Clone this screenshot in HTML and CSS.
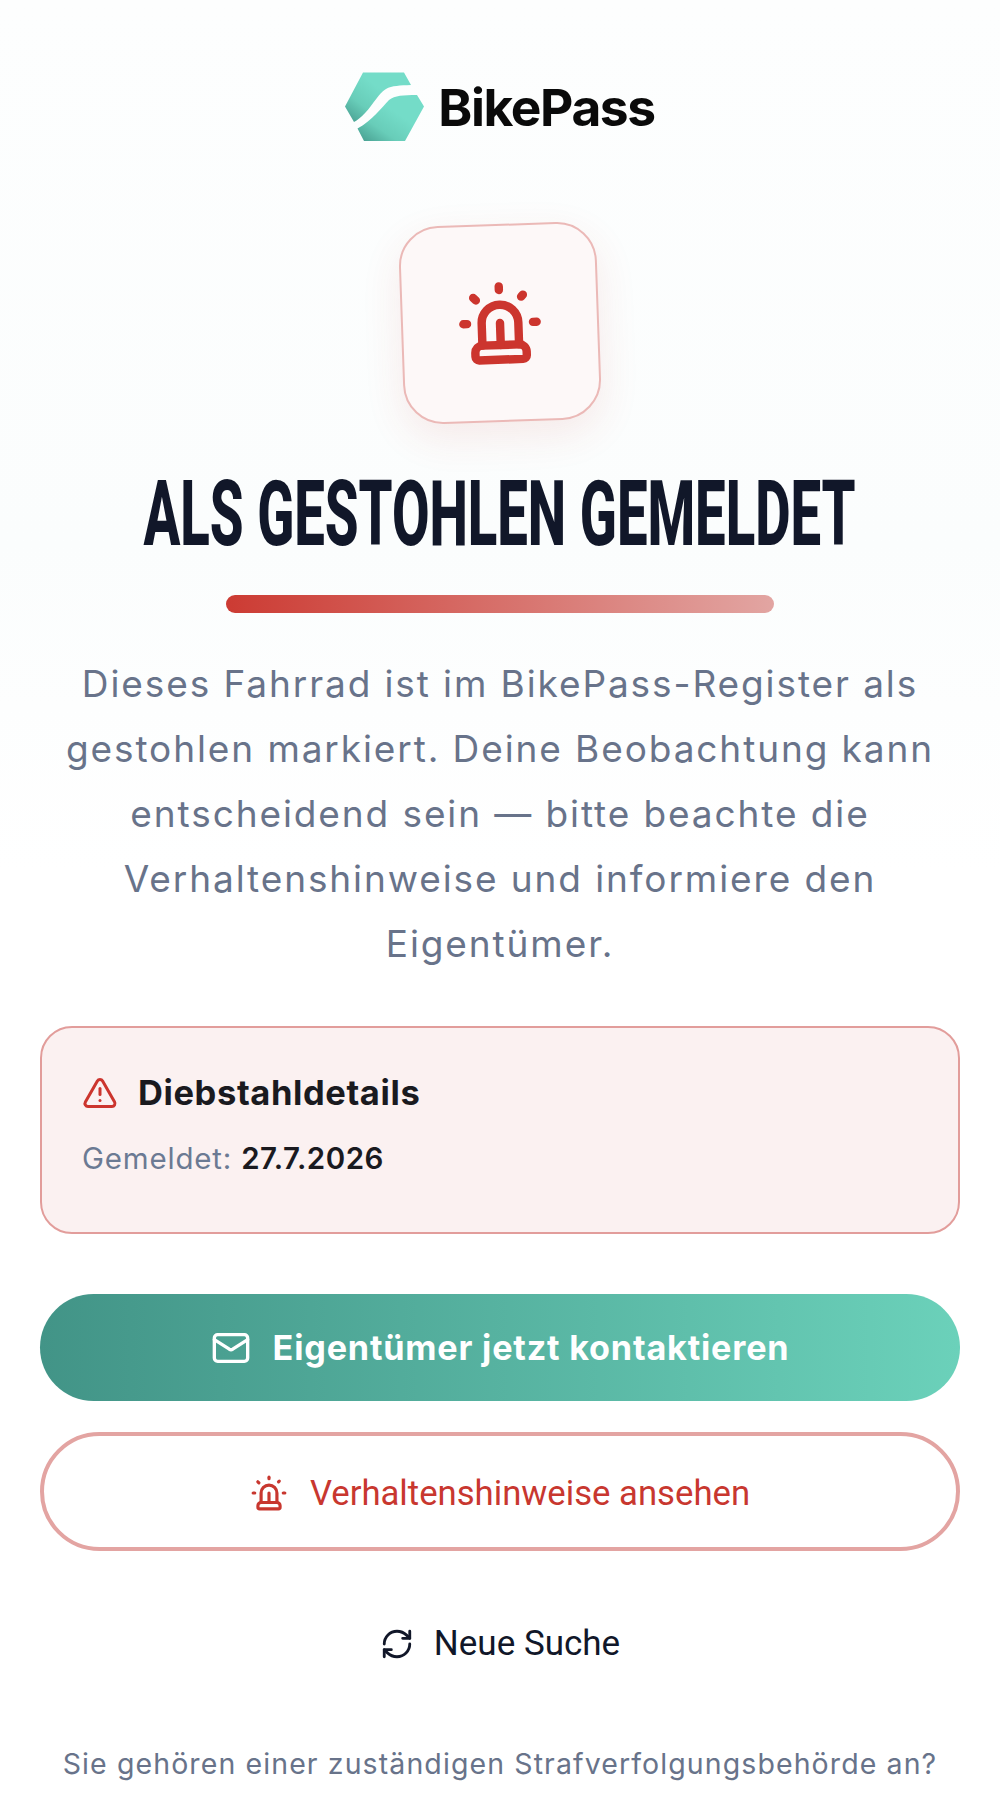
FILE: index.html
```html
<!DOCTYPE html>
<html lang="de">
<head>
<meta charset="utf-8">
<title>BikePass</title>
<link rel="stylesheet" href="styles.css">
</head>
<body>
<main class="page">
  <header class="brand">
    <svg class="brand-mark" viewBox="0 0 80 70" aria-hidden="true">
      <defs>
        <linearGradient id="hex" x1="0" y1="1" x2="0.6" y2="0.4">
          <stop offset="0" stop-color="#459b8d"/>
          <stop offset="0.5" stop-color="#68cdb9"/>
          <stop offset="1" stop-color="#74dcc8"/>
        </linearGradient>
      </defs>
      <path fill="url(#hex)" d="M18 0.5H59L66 13C55 13.500 47 13.500 41 17C31 23 24 42 9 50L0 34.500Z"/>
      <path fill="url(#hex)" d="M72 23L79 34.500L60 69H19L12.500 56.500C28 48 36 36 44 28C50 23.500 58 23 72 23Z"/>
    </svg>
    <span class="brand-name">BikePass</span>
  </header>

  <div class="tile">
    <svg class="tile-icon" viewBox="0 0 24 24" fill="none" stroke="currentColor" stroke-width="2.300" stroke-linecap="round" stroke-linejoin="round" aria-hidden="true">
      <path d="M7 18v-6a5 5 0 1 1 10 0v6"/>
      <path d="M5 21a1 1 0 0 0 1 1h12a1 1 0 0 0 1-1v-1a2 2 0 0 0-2-2H7a2 2 0 0 0-2 2z"/>
      <path d="M21 12h1"/><path d="M18.500 4.500 18 5"/><path d="M2 12h1"/><path d="M12 2v1"/><path d="m4.929 4.929.707.707"/><path d="M12 12v6"/>
    </svg>
  </div>

  <h1 class="title">ALS GESTOHLEN GEMELDET</h1>
  <div class="title-bar"></div>

  <p class="lead">Dieses Fahrrad ist im BikePass-Register als gestohlen markiert. Deine Beobachtung kann entscheidend sein — bitte beachte die Verhaltenshinweise und informiere den Eigentümer.</p>

  <section class="details">
    <div class="details-head">
      <svg class="details-icon" viewBox="0 0 24 24" fill="none" stroke="currentColor" stroke-width="2" stroke-linecap="round" stroke-linejoin="round" aria-hidden="true">
        <path d="m21.730 18-8-14a2 2 0 0 0-3.480 0l-8 14A2 2 0 0 0 4 21h16a2 2 0 0 0 1.730-3"/>
        <path d="M12 9v4"/><path d="M12 17h.01"/>
      </svg>
      <h2 class="details-title">Diebstahldetails</h2>
    </div>
    <p class="details-row"><span class="details-label">Gemeldet:</span> <strong class="details-value">27.7.2026</strong></p>
  </section>

  <a class="btn btn-primary">
    <svg class="btn-icon-mail" viewBox="0 0 24 24" fill="none" stroke="currentColor" stroke-width="2" stroke-linecap="round" stroke-linejoin="round" aria-hidden="true">
      <path d="m22 7-8.991 5.727a2 2 0 0 1-2.009 0L2 7"/>
      <rect x="2" y="4" width="20" height="16" rx="2"/>
    </svg>
    Eigentümer jetzt kontaktieren
  </a>

  <a class="btn btn-outline">
    <svg class="btn-icon-siren" viewBox="0 0 24 24" fill="none" stroke="currentColor" stroke-width="2" stroke-linecap="round" stroke-linejoin="round" aria-hidden="true">
      <path d="M7 18v-6a5 5 0 1 1 10 0v6"/>
      <path d="M5 21a1 1 0 0 0 1 1h12a1 1 0 0 0 1-1v-1a2 2 0 0 0-2-2H7a2 2 0 0 0-2 2z"/>
      <path d="M21 12h1"/><path d="M18.500 4.500 18 5"/><path d="M2 12h1"/><path d="M12 2v1"/><path d="m4.929 4.929.707.707"/><path d="M12 12v6"/>
    </svg>
    Verhaltenshinweise ansehen
  </a>

  <a class="search-again">
    <svg class="search-icon" viewBox="0 0 24 24" fill="none" stroke="currentColor" stroke-width="2" stroke-linecap="round" stroke-linejoin="round" aria-hidden="true">
      <path d="M3 12a9 9 0 0 1 9-9 9.750 9.750 0 0 1 6.740 2.740L21 8"/><path d="M21 3v5h-5"/>
      <path d="M21 12a9 9 0 0 1-9 9 9.750 9.750 0 0 1-6.740-2.740L3 16"/><path d="M8 16H3v5"/>
    </svg>
    Neue Suche
  </a>

  <p class="footnote">Sie gehören einer zuständigen Strafverfolgungsbehörde an?</p>
</main>
</body>
</html>
```

FILE: styles.css
```css
* { box-sizing: border-box; }
html, body { margin: 0; padding: 0; background: #fff; }
body { font-family: Inter, "Liberation Sans", sans-serif; overflow: hidden; }
.page {
  height: 1816px;
  overflow: hidden;
  padding: 72px 40px 0;
  display: flex;
  flex-direction: column;
  align-items: center;
  background: linear-gradient(180deg, #fdfefe 0%, #fbfdfd 30%, #ffffff 48%, #ffffff 100%);
}
.brand { display: flex; align-items: center; gap: 13px; height: 70px; }
.brand-mark { width: 80px; height: 70px; display: block; }
.brand-name { font-weight: 700; font-size: 51.500px; letter-spacing: -1.400px; color: #0a0a0a; line-height: 70px; }
.tile {
  margin-top: 82px;
  width: 198px;
  height: 198px;
  flex: none;
  border: 2px solid #ebb9b7;
  border-radius: 40px;
  background: #fdf8f8;
  transform: rotate(-2deg);
  box-shadow: 0 14px 40px rgba(200, 60, 50, 0.10);
  display: flex;
  align-items: center;
  justify-content: center;
  color: #cc352e;
}
.tile-icon { width: 88px; height: 88px; }
.title {
  margin: 50px 0 0;
  flex: none;
  font-family: Roboto, "Liberation Sans", sans-serif;
  font-weight: 800;
  font-size: 90px;
  line-height: 86px;
  color: #111729;
  white-space: nowrap;
  transform: scaleX(0.605);
}
.title-bar {
  margin-top: 37px;
  width: 548px;
  height: 18px;
  flex: none;
  border-radius: 9px;
  background: linear-gradient(90deg, #cc3b33, #e2a5a2);
}
.lead {
  margin: 38px 0 0;
  font-size: 37px;
  line-height: 65px;
  letter-spacing: 1.900px;
  color: #68738a;
  text-align: center;
}
.details {
  margin-top: 50px;
  width: 920px;
  height: 208px;
  flex: none;
  border: 2px solid #e29d9b;
  border-radius: 32px;
  background: #fbf1f1;
  padding: 43px 40px 0;
}
.details-head { display: flex; align-items: center; gap: 20px; }
.details-icon { width: 36px; height: 36px; color: #cc352e; flex: none; }
.details-title { margin: 0; font-size: 34.500px; line-height: 44px; font-weight: 700; color: #1a1a1f; letter-spacing: 0.600px; }
.details-row { margin: 21px 0 0; font-size: 29.500px; line-height: 44px; letter-spacing: 0.800px; }
.details-label { color: #6b7a93; }
.details-value { font-weight: 600; color: #1a1a1f; letter-spacing: 0.500px; }
.btn {
  width: 920px;
  flex: none;
  display: flex;
  align-items: center;
  justify-content: center;
  border-radius: 60px;
}
.btn-primary {
  margin-top: 60px;
  height: 107px;
  gap: 22px;
  background: linear-gradient(90deg, #429487, #6bd1ba);
  color: #fff;
  font-weight: 700;
  font-size: 34.200px;
  letter-spacing: 0.800px;
}
.btn-icon-mail { width: 40px; height: 40px; }
.btn-outline {
  margin-top: 31px;
  height: 119px;
  gap: 22px;
  padding-top: 3px;
  border: 4px solid #e3a4a2;
  background: #fff;
  color: #c8372f;
  font-family: Roboto, sans-serif;
  font-size: 34.700px;
}
.btn-icon-siren { width: 38px; height: 38px; }
.search-again {
  margin-top: 66px;
  display: flex;
  align-items: center;
  gap: 20px;
  font-family: Roboto, sans-serif;
  font-size: 35px;
  line-height: 54px;
  color: #111729;
}
.search-icon { width: 34px; height: 34px; }
.footnote {
  margin: 71px 0 0;
  font-size: 28.500px;
  line-height: 44px;
  letter-spacing: 1.100px;
  color: #68738a;
  white-space: nowrap;
}
```
